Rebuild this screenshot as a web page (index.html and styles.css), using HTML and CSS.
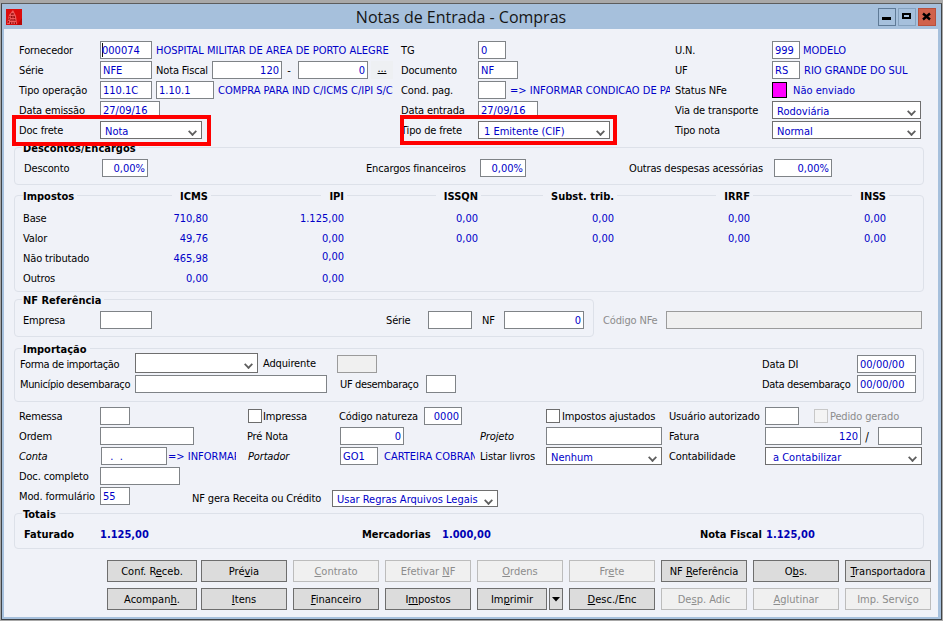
FILE: index.html
```html
<!DOCTYPE html>
<html lang="pt">
<head>
<meta charset="utf-8">
<title>Notas de Entrada - Compras</title>
<link rel="stylesheet" href="styles.css">
</head>
<body>
<div class="window">
  <header class="titlebar">
    <svg class="app-icon" width="16" height="16" viewBox="0 0 16 16"><rect width="16" height="16" fill="#dc0c0c"/><path d="M11 16L16 9V16z" fill="#b80606"/><path d="M1 15L3 6 7 1l3 6 1 8z" fill="#ef5c5c"/><path d="M2 14L4 7M4.5 15L6 4M7 15V3M9.5 15L8 6" stroke="#8a0404" stroke-width="1" stroke-dasharray="2 1" fill="none"/></svg>
    <h1 class="title">Notas de Entrada - Compras</h1>
    <div class="controls">
      <div class="ctl ctl-min"><svg width="18" height="18" viewBox="0 0 18 18"><rect x="4" y="9" width="9" height="3" fill="#000"/></svg></div>
      <div class="ctl ctl-max"><svg width="18" height="18" viewBox="0 0 18 18"><rect x="5" y="6" width="7" height="4" fill="none" stroke="#000" stroke-width="2"/></svg></div>
      <div class="ctl ctl-close"><svg width="18" height="18" viewBox="0 0 18 18"><path d="M5 5.5L12 11.5M12 5.5L5 11.5" stroke="#000" stroke-width="2.4" fill="none"/></svg></div>
    </div>
  </header>
  <main class="client">
    <section class="head">
      <div class="row">
        <span class="w81">Fornecedor</span><span class="f w52 v caret">000074</span><span class="v ml4 w245">HOSPITAL MILITAR DE AREA DE PORTO ALEGRE</span>
        <span class="w77">TG</span><span class="f w28 v">0</span><span class="w169"></span>
        <span class="w97">U.N.</span><span class="f w28 v">999</span><span class="v ml3">MODELO</span>
      </div>
      <div class="row">
        <span class="w81">Série</span><span class="f w52 v">NFE</span><span class="ml4 w56">Nota Fiscal</span><span class="f w70 v r">120</span><span class="w16 dash">-</span><span class="f w70 v r">0</span><span class="dots">...</span><span class="w8"></span>
        <span class="w77">Documento</span><span class="f w40 v">NF</span><span class="w157"></span>
        <span class="w97">UF</span><span class="f w28 v">RS</span><span class="v ml4">RIO GRANDE DO SUL</span>
      </div>
      <div class="row">
        <span class="w81">Tipo operação</span><span class="f w52 v">110.1C</span><span class="f w58 v ml4">1.10.1</span><span class="v ml4 w176 clip">COMPRA PARA IND C/ICMS C/IPI S/C</span><span class="w7"></span>
        <span class="w77">Cond. pag.</span><span class="f w28"></span><span class="v ml4 w160 clip">=&gt; INFORMAR CONDICAO DE PA</span><span class="w5"></span>
        <span class="w97">Status NFe</span><span class="swatch"></span><span class="v ml6">Não enviado</span>
      </div>
      <div class="row">
        <span class="w81">Data emissão</span><span class="f w60 v">27/09/16</span><span class="w241"></span>
        <span class="w77">Data entrada</span><span class="f w60 v">27/09/16</span><span class="w137"></span>
        <span class="w97">Via de transporte</span><span class="s w149 v">Rodoviária</span>
      </div>
      <div class="row">
        <span class="w81">Doc frete</span><span class="s w102 v">Nota</span><span class="w199"></span>
        <span class="w77">Tipo de frete</span><span class="s w132 v pl5">1 Emitente (CIF)</span><span class="w65"></span>
        <span class="w97">Tipo nota</span><span class="s w149 v">Normal</span>
      </div>
    </section>

    <section class="panel p-desc">
      <h2 class="legend">Descontos/Encargos</h2>
      <div class="row">
        <span class="w78 ml9">Desconto</span><span class="f w46 v r">0,00%</span><span class="w218"></span>
        <span class="w114">Encargos financeiros</span><span class="f w46 v r">0,00%</span><span class="w103"></span>
        <span class="w145">Outras despesas acessórias</span><span class="f w58 v r">0,00%</span>
      </div>
    </section>

    <section class="panel p-imp">
      <div class="taxhead">
        <span class="tl">Impostos</span><span class="th c1"><span>ICMS</span></span><span class="th c2"><span>IPI</span></span><span class="th c3"><span>ISSQN</span></span><span class="th c4"><span>Subst. trib.</span></span><span class="th c5"><span>IRRF</span></span><span class="th c6"><span>INSS</span></span>
      </div>
      <div class="taxrow"><span class="tl">Base</span><span class="tv c1">710,80</span><span class="tv c2">1.125,00</span><span class="tv c3">0,00</span><span class="tv c4">0,00</span><span class="tv c5">0,00</span><span class="tv c6">0,00</span></div>
      <div class="taxrow"><span class="tl">Valor</span><span class="tv c1">49,76</span><span class="tv c2">0,00</span><span class="tv c3">0,00</span><span class="tv c4">0,00</span><span class="tv c5">0,00</span><span class="tv c6">0,00</span></div>
      <div class="taxrow"><span class="tl">Não tributado</span><span class="tv c1">465,98</span><span class="tv c2 up2">0,00</span></div>
      <div class="taxrow"><span class="tl">Outros</span><span class="tv c1">0,00</span><span class="tv c2">0,00</span></div>
    </section>

    <div class="refline">
      <section class="panel p-ref">
        <h2 class="legend">NF Referência</h2>
        <div class="row">
          <span class="w77 ml8">Empresa</span><span class="f w52"></span><span class="w234"></span>
          <span class="w42">Série</span><span class="f w44"></span><span class="w10"></span>
          <span class="w22">NF</span><span class="f w80 v r">0</span>
        </div>
      </section>
      <div class="row nfe">
        <span class="w63 dis">Código NFe</span><span class="f w256 off"></span>
      </div>
    </div>

    <section class="panel p-impo">
      <h2 class="legend">Importação</h2>
      <div class="row">
        <span class="w115 ml5 tight">Forma de importação</span><span class="s w123 tall"></span><span class="w5"></span>
        <span class="w74 up1">Adquirente</span><span class="f w40 off"></span><span class="w385"></span>
        <span class="w95">Data DI</span><span class="f w59 v">00/00/00</span>
      </div>
      <div class="row">
        <span class="w115 ml5 tight">Município desembaraço</span><span class="f w192"></span><span class="w13"></span>
        <span class="w86 tight">UF desembaraço</span><span class="f w30"></span><span class="w306"></span>
        <span class="w95 tight">Data desembaraço</span><span class="f w59 v">00/00/00</span>
      </div>
    </section>

    <section class="lower">
      <div class="row">
        <span class="w81">Remessa</span><span class="f w30"></span><span class="w118"></span>
        <span class="chk"></span><span class="ml1 w76">Impressa</span><span class="w85">Código natureza</span><span class="f w38 v r">0000</span><span class="w84"></span>
        <span class="chk"></span><span class="ml2 w107">Impostos ajustados</span><span class="w96">Usuário autorizado</span><span class="f w34"></span><span class="w15"></span>
        <span class="chk chk-off"></span><span class="ml2 dis">Pedido gerado</span>
      </div>
      <div class="row">
        <span class="w81">Ordem</span><span class="f w94"></span><span class="w53"></span>
        <span class="w93">Pré Nota</span><span class="f w64 v r">0</span><span class="w76"></span><span class="w66 i">Projeto</span><span class="f w116"></span><span class="w7"></span>
        <span class="w96">Fatura</span><span class="f w96 v r">120</span><span class="w17 slash">/</span><span class="f w44"></span>
      </div>
      <div class="row">
        <span class="w82 i">Conta</span><span class="f w66 v">&nbsp; . &nbsp;.</span><span class="v w68 clip ml1">=&gt; INFORMAR</span><span class="w12"></span>
        <span class="w92 i">Portador</span><span class="f w38 v">GO1</span><span class="v ml6 w91 clip">CARTEIRA COBRAN</span><span class="w5"></span><span class="w66">Listar livros</span><span class="s w116 v">Nenhum</span><span class="w7"></span>
        <span class="w96">Contabilidade</span><span class="s w157 v sp">a Contabilizar</span>
      </div>
      <div class="row">
        <span class="w81">Doc. completo</span><span class="f w80"></span>
      </div>
      <div class="row">
        <span class="w81">Mod. formulário</span><span class="f w30 v">55</span><span class="w62"></span>
        <span class="w140 dn2">NF gera Receita ou Crédito</span><span class="s w166 v short">Usar Regras Arquivos Legais</span>
      </div>
    </section>

    <section class="panel p-tot">
      <h2 class="legend">Totais</h2>
      <div class="row">
        <span class="w76 ml9 b">Faturado</span><span class="w262 b bv">1.125,00</span>
        <span class="w80 b">Mercadorias</span><span class="w258 b bv">1.000,00</span>
        <span class="w66 b">Nota Fiscal</span><span class="b bv">1.125,00</span>
      </div>
    </section>

    <nav class="buttons">
      <button class="btn k1"><span>Conf. R<u>e</u>ceb.</span></button>
      <button class="btn"><span>Pré<u>v</u>ia</span></button>
      <button class="btn off"><span><u>C</u>ontrato</span></button>
      <button class="btn off"><span>Efetivar <u>N</u>F</span></button>
      <button class="btn off"><span><u>O</u>rdens</span></button>
      <button class="btn off"><span>Fr<u>e</u>te</span></button>
      <button class="btn"><span>NF <u>R</u>eferência</span></button>
      <button class="btn"><span>O<u>b</u>s.</span></button>
      <button class="btn"><span><u>T</u>ransportadora</span></button>
      <button class="btn k1"><span>Acompan<u>h</u>.</span></button>
      <button class="btn"><span><u>I</u>tens</span></button>
      <button class="btn"><span><u>F</u>inanceiro</span></button>
      <button class="btn"><span>I<u>m</u>postos</span></button>
      <div class="split">
        <button class="btn grow"><span>Im<u>p</u>rimir</span></button>
        <button class="btn drop" aria-label="Mais"><svg width="8" height="5" viewBox="0 0 8 5"><path d="M0 0h8L4 4.5z" fill="#000"/></svg></button>
      </div>
      <button class="btn"><span><u>D</u>esc./Enc</span></button>
      <button class="btn off"><span>De<u>s</u>p. Adic</span></button>
      <button class="btn off"><span><u>A</u>glutinar</span></button>
      <button class="btn off"><span>Imp. Servi<u>ç</u>o</span></button>
    </nav>

    <div class="mark mark-a"></div>
    <div class="mark mark-b"></div>
  </main>
</div>
</body>
</html>
```
FILE: styles.css
```css
* { box-sizing: border-box; }
html, body { margin: 0; padding: 0; }
body {
  width: 943px; height: 621px; overflow: hidden; background: #a8a8a8;
  font: 11px/14px "DejaVu Sans Condensed", "DejaVu Sans", sans-serif; color: #000;
}
.window {
  width: 941px; height: 617px; margin: 3px 1px 0;
  background: #a6c0dc; border: 1px solid #3f4448; border-top-color: #5c5c5c;
  display: flex; flex-direction: column; padding: 0 3px 2px 2px;
}
.titlebar { height: 25px; flex: none; display: flex; align-items: center; position: relative; }
.app-icon { margin: 1px 0 0 2px; }
.title {
  position: absolute; left: 0; right: 0; top: 3px; margin: 0; text-align: center;
  font: 400 16px/20px "Open Sans", sans-serif; color: #151515; padding-right: 20px;
}
.controls { margin-left: auto; margin-top: 1px; margin-right: 2px; display: flex; gap: 2px; position: relative; }
.ctl { width: 18px; height: 18px; border: 1px solid #7892ac; }
.ctl svg { display: block; margin: -1px; }
.ctl-min { border-color: #5f7a96; }
.ctl-max { border-color: #86a2be; }
.ctl-close { background: #d0624c; border-color: #b8503c; }

.client { flex: 1; background: #f0f2f8; position: relative; padding: 11px 0 0 0; min-height: 0; }
.head, .lower { padding-left: 15px; }
.row { display: flex; align-items: center; height: 20px; white-space: nowrap; flex: none; }
.row > span { flex: none; letter-spacing: -.15px; }
.row > span:not(.f):not(.s):not(.swatch):not(.chk):not(.dots) { padding-top: 2px; }
.row > .v, .row > .b { letter-spacing: 0; }
.row > .tight { letter-spacing: -.35px; }

.f {
  height: 18px; background: #fff; border: 1px solid #7f8387; line-height: 18px;
  padding: 0 2px; overflow: hidden; display: block;
}
.s {
  height: 18px; background: #fff; border: 1px solid #6f6f6f; line-height: 19px;
  padding: 0 4px; position: relative; display: block; overflow: hidden;
}
.s::after {
  content: ""; position: absolute; right: 5px; top: 6px; width: 5px; height: 5px;
  border-right: 2px solid #5e5e5e; border-bottom: 2px solid #5e5e5e;
  transform: rotate(45deg) scale(.9);
}
.tall { height: 20px; margin-top: -2px; }
.tall::after { top: 7px; }
.short { height: 17px; margin-top: 5px; line-height: 18px; }
.sp { padding-left: 7px; }
.pl5 { padding-left: 5px; }
.v { color: #0000c8; }
.r { text-align: right; }
.b { font-weight: 700; }
.i { font-style: italic; }
.dis { color: #8c8c8c; }
.clip { overflow: hidden; }
.off { background: #f0f0f0; border-color: #9b9b9b; }
.caret { padding-left: 1px; background: linear-gradient(#111, #111) 1px 1px / 1px 14px no-repeat #fff; }
.swatch { width: 15px; height: 16px; background: #ff00ff; border: 1px solid #000; }
.dots {
  width: 22px; height: 18px; margin-left: 3px; background: #eef0f3; text-align: center; line-height: 15px;
  text-decoration: underline;
}
.dash { text-align: center; padding-right: 2px; }
.slash { text-align: center; padding-right: 5px; font-size: 12px; }
.chk { width: 14px; height: 14px; background: #fff; border: 1px solid #6d6d6d; }
.chk-off { background: #f4f4f4; border-color: #c8c8c8; }
.up1 { margin-top: -2px; }
.dn2 { margin-top: 4px; }

.panel {
  position: relative; flex: none; margin-left: 10px; width: 910px;
  border: 1px solid #dde1e9; border-radius: 4px;
}
.legend {
  position: absolute; left: 7px; top: -6px; margin: 0; padding: 0 3px 0 1px; background: #f0f2f8;
  font: 700 11px/14px "DejaVu Sans Condensed", "DejaVu Sans", sans-serif; color: #000;
}
.p-desc { height: 38px; margin-top: 7px; padding-top: 10px; }
.p-imp { height: 97px; margin-top: 10px; }
.taxhead { position: absolute; left: 0; right: 0; top: -6px; height: 14px; font-weight: 700; }
.taxrow { position: relative; height: 20px; line-height: 20px; letter-spacing: -.15px; }
.taxhead + .taxrow { margin-top: 13px; }
.tl { position: absolute; left: 8px; padding-right: 3px; background: #f0f2f8; }
.th, .tv { position: absolute; text-align: right; width: 90px; }
.th > span { background: #f0f2f8; padding: 0 3px 0 8px; margin-right: -3px; }
.tv { color: #0000c8; letter-spacing: 0; }
.c1 { left: 103px; }
.c2 { left: 239px; }
.c3 { left: 373px; }
.c4 { left: 509px; }
.c5 { left: 645px; }
.c6 { left: 781px; }
.up2 { top: -2px; }
.refline { display: flex; align-items: flex-start; margin-top: 7px; flex: none; }
.p-ref { width: 580px; height: 38px; padding-top: 10px; }
.nfe { margin-left: 9px; margin-top: 11px; }
.p-impo { height: 54px; margin-top: 11px; padding-top: 5px; }
.lower { margin-top: 4px; }
.p-tot { height: 36px; margin-top: 7px; padding-top: 10px; }
.bv { color: #0000b4; }

.buttons {
  display: grid; grid-template-columns: 88px repeat(8, 86px); column-gap: 6px; row-gap: 6px;
  margin: 11px 0 0 103px; width: 824px; flex: none;
}
.btn {
  height: 22px; padding: 1px 0 0; margin: 0; background: #dcdcdc; border: 1px solid #6e6e6e; color: #000;
  font: 11px/14px "DejaVu Sans Condensed", "DejaVu Sans", sans-serif; display: block;
}
.btn.off { background: #f0f0f0; border-color: #bcbcbc; color: #8c8c8c; }
.k1 { width: 90px; }
.split { display: flex; gap: 2px; }
.grow { flex: 1; }
.drop { width: 14px; flex: none; display: flex; align-items: center; justify-content: center; }

.mark { position: absolute; border: 4px solid #f00; background: transparent; pointer-events: none; }
.mark-a { left: 8px; top: 86px; width: 199px; height: 31px; }
.mark-b { left: 396px; top: 86px; width: 217px; height: 30px; }

.ml1 { margin-left: 1px; } .ml2 { margin-left: 2px; } .ml3 { margin-left: 3px; } .ml4 { margin-left: 4px; } .ml5 { margin-left: 5px; }
.ml6 { margin-left: 6px; } .ml8 { margin-left: 8px; } .ml9 { margin-left: 9px; }
.w5 { width: 5px; } .w7 { width: 7px; } .w8 { width: 8px; } .w10 { width: 10px; } .w12 { width: 12px; } .w13 { width: 13px; }
.w15 { width: 15px; } .w16 { width: 16px; } .w17 { width: 17px; } .w22 { width: 22px; } .w28 { width: 28px; } .w30 { width: 30px; }
.w34 { width: 34px; } .w38 { width: 38px; } .w40 { width: 40px; } .w42 { width: 42px; } .w44 { width: 44px; } .w46 { width: 46px; }
.w52 { width: 52px; } .w53 { width: 53px; } .w56 { width: 56px; } .w58 { width: 58px; } .w59 { width: 59px; } .w60 { width: 60px; }
.w62 { width: 62px; } .w63 { width: 63px; } .w64 { width: 64px; } .w65 { width: 65px; } .w66 { width: 66px; } .w68 { width: 68px; }
.w70 { width: 70px; } .w74 { width: 74px; } .w76 { width: 76px; } .w77 { width: 77px; } .w78 { width: 78px; } .w80 { width: 80px; } .w81 { width: 81px; }
.w82 { width: 82px; } .w84 { width: 84px; } .w85 { width: 85px; } .w86 { width: 86px; } .w91 { width: 91px; } .w92 { width: 92px; } .w93 { width: 93px; }
.w94 { width: 94px; } .w95 { width: 95px; } .w96 { width: 96px; } .w97 { width: 97px; } .w102 { width: 102px; } .w103 { width: 103px; }
.w107 { width: 107px; } .w114 { width: 114px; } .w115 { width: 115px; } .w116 { width: 116px; } .w118 { width: 118px; } .w123 { width: 123px; }
.w132 { width: 132px; } .w137 { width: 137px; } .w140 { width: 140px; } .w145 { width: 145px; } .w149 { width: 149px; } .w157 { width: 157px; }
.w160 { width: 160px; } .w166 { width: 166px; } .w169 { width: 169px; } .w176 { width: 176px; } .w192 { width: 192px; } .w199 { width: 199px; }
.w218 { width: 218px; } .w234 { width: 234px; } .w241 { width: 241px; } .w245 { width: 245px; } .w256 { width: 256px; } .w258 { width: 258px; }
.w262 { width: 262px; } .w306 { width: 306px; } .w385 { width: 385px; }
```
